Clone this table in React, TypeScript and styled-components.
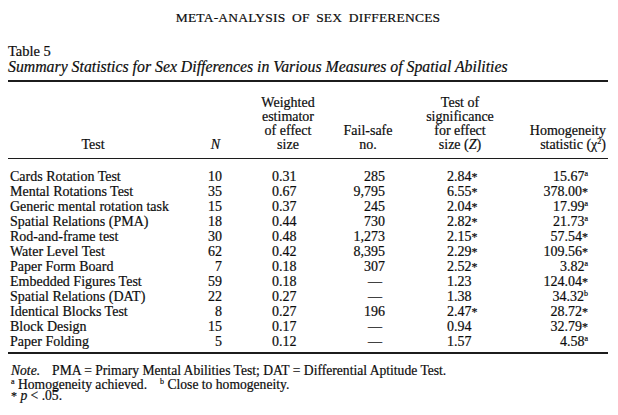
import React from "react";
import styled, { createGlobalStyle } from "styled-components";

const GlobalStyle = createGlobalStyle`
  html, body {
    margin: 0;
    padding: 0;
    background: #ffffff;
  }
  body {
    font-family: "Liberation Serif", "Times New Roman", serif;
    color: #0d0d0d;
    -webkit-text-stroke: 0.2px #0d0d0d;
  }
`;

const Page = styled.div`
  width: 618px;
  height: 415px;
  box-sizing: border-box;
  padding: 10px 10px 0 8px;
  overflow: hidden;
`;

const RunningHead = styled.div`
  font-size: 13.5px;
  line-height: 16px;
  letter-spacing: 0.2px;
  word-spacing: 3px;
  text-align: center;
`;

const Caption = styled.div`
  margin-top: 18px;
  margin-bottom: 6px;
`;

const TableLabel = styled.div`
  font-size: 14.5px;
  line-height: 15px;
`;

const TableTitle = styled.div`
  font-size: 15.8px;
  line-height: 15px;
  height: 15px;
  font-style: italic;
  white-space: nowrap;
`;

const Table = styled.table`
  width: 600px;
  border-collapse: collapse;
  table-layout: fixed;
  font-size: 14px;
`;

const Head = styled.thead`
  border-top: 2px solid #1c1c1c;
  border-bottom: 1px solid #1c1c1c;
`;

const Body = styled.tbody`
  border-bottom: 2px solid #1c1c1c;
`;

type Align = "left" | "center" | "right";

const HeadCell = styled.th<{ $align?: Align; $padL?: number; $padR?: number }>`
  font-weight: normal;
  line-height: 14px;
  vertical-align: bottom;
  white-space: nowrap;
  text-align: ${(p) => p.$align ?? "center"};
  padding: 14px ${(p) => p.$padR ?? 0}px 6px ${(p) => p.$padL ?? 0}px;
`;

const Cell = styled.td<{ $align?: Align; $padL?: number; $padR?: number; $first?: boolean; $last?: boolean }>`
  line-height: 15px;
  height: 15px;
  white-space: nowrap;
  text-align: ${(p) => p.$align ?? "left"};
  padding: ${(p) => (p.$first ? 10 : 0)}px ${(p) => p.$padR ?? 0}px
    ${(p) => (p.$last ? 3 : 0)}px ${(p) => p.$padL ?? 0}px;
`;

const Italic = styled.i`
  font-style: italic;
`;

const Sup = styled.sup`
  font-size: 8px;
  line-height: 1;
  vertical-align: 5px;
`;

const Star = styled.span`
  font-size: 12px;
  line-height: 1;
`;

const Dash = styled.span`
  display: inline-block;
  margin-right: 3px;
`;

const Notes = styled.div`
  margin-top: 11px;
  padding-left: 3px;
  font-size: 13.6px;
  line-height: 12.5px;
`;

const NoteLine = styled.div`
  height: 12.5px;
  white-space: nowrap;
`;

const Gap = styled.span<{ $w: number }>`
  display: inline-block;
  width: ${(p) => p.$w}px;
`;

type Mark = "a" | "b" | "*" | "";

interface Row {
  test: string;
  n: number;
  w: string;
  fs: string;
  z: string;
  zStar: boolean;
  h: string;
  hMark: Mark;
}

const rows: Row[] = [
  { test: "Cards Rotation Test", n: 10, w: "0.31", fs: "285", z: "2.84", zStar: true, h: "15.67", hMark: "a" },
  { test: "Mental Rotations Test", n: 35, w: "0.67", fs: "9,795", z: "6.55", zStar: true, h: "378.00", hMark: "*" },
  { test: "Generic mental rotation task", n: 15, w: "0.37", fs: "245", z: "2.04", zStar: true, h: "17.99", hMark: "a" },
  { test: "Spatial Relations (PMA)", n: 18, w: "0.44", fs: "730", z: "2.82", zStar: true, h: "21.73", hMark: "a" },
  { test: "Rod-and-frame test", n: 30, w: "0.48", fs: "1,273", z: "2.15", zStar: true, h: "57.54", hMark: "*" },
  { test: "Water Level Test", n: 62, w: "0.42", fs: "8,395", z: "2.29", zStar: true, h: "109.56", hMark: "*" },
  { test: "Paper Form Board", n: 7, w: "0.18", fs: "307", z: "2.52", zStar: true, h: "3.82", hMark: "a" },
  { test: "Embedded Figures Test", n: 59, w: "0.18", fs: "", z: "1.23", zStar: false, h: "124.04", hMark: "*" },
  { test: "Spatial Relations (DAT)", n: 22, w: "0.27", fs: "", z: "1.38", zStar: false, h: "34.32", hMark: "b" },
  { test: "Identical Blocks Test", n: 8, w: "0.27", fs: "196", z: "2.47", zStar: true, h: "28.72", hMark: "*" },
  { test: "Block Design", n: 15, w: "0.17", fs: "", z: "0.94", zStar: false, h: "32.79", hMark: "*" },
  { test: "Paper Folding", n: 5, w: "0.12", fs: "", z: "1.57", zStar: false, h: "4.58", hMark: "a" },
];

const renderMark = (m: Mark) => {
  if (m === "*") return <Star>*</Star>;
  if (m === "a" || m === "b") return <Sup>{m}</Sup>;
  return null;
};

export default function App() {
  return (
    <>
      <GlobalStyle />
      <Page>
        <RunningHead>META-ANALYSIS OF SEX DIFFERENCES</RunningHead>
        <Caption>
          <TableLabel>Table 5</TableLabel>
          <TableTitle>
            Summary Statistics for Sex Differences in Various Measures of Spatial Abilities
          </TableTitle>
        </Caption>
        <Table>
          <colgroup>
            <col style={{ width: 170 }} />
            <col style={{ width: 48 }} />
            <col style={{ width: 110 }} />
            <col style={{ width: 64 }} />
            <col style={{ width: 120 }} />
            <col style={{ width: 88 }} />
          </colgroup>
          <Head>
            <tr>
              <HeadCell>Test</HeadCell>
              <HeadCell $align="right" $padR={6}>
                <Italic>N</Italic>
              </HeadCell>
              <HeadCell $padL={14}>
                Weighted
                <br />
                estimator
                <br />
                of effect
                <br />
                size
              </HeadCell>
              <HeadCell>
                Fail-safe
                <br />
                no.
              </HeadCell>
              <HeadCell>
                Test of
                <br />
                significance
                <br />
                for effect
                <br />
                size (<Italic>Z</Italic>)
              </HeadCell>
              <HeadCell $align="right" $padR={2}>
                Homogeneity
                <br />
                statistic (χ<Sup>2</Sup>)
              </HeadCell>
            </tr>
          </Head>
          <Body>
            {rows.map((r, i) => {
              const first = i === 0;
              const last = i === rows.length - 1;
              return (
                <tr key={r.test}>
                  <Cell $padL={2} $first={first} $last={last}>
                    {r.test}
                  </Cell>
                  <Cell $align="right" $padR={4} $first={first} $last={last}>
                    {r.n}
                  </Cell>
                  <Cell $align="left" $padL={46} $first={first} $last={last}>
                    {r.w}
                  </Cell>
                  <Cell $align="right" $padR={15} $first={first} $last={last}>
                    {r.fs === "" ? <Dash>—</Dash> : r.fs}
                  </Cell>
                  <Cell $align="left" $padL={47} $first={first} $last={last}>
                    {r.z}
                    {r.zStar ? <Star>*</Star> : null}
                  </Cell>
                  <Cell $align="right" $padR={20} $first={first} $last={last}>
                    {r.h}
                    {renderMark(r.hMark)}
                  </Cell>
                </tr>
              );
            })}
          </Body>
        </Table>
        <Notes>
          <NoteLine>
            <Italic>Note.</Italic>
            <Gap $w={12} />
            PMA = Primary Mental Abilities Test; DAT = Differential Aptitude Test.
          </NoteLine>
          <NoteLine>
            <Sup>a</Sup> Homogeneity achieved.
            <Gap $w={13} />
            <Sup>b</Sup> Close to homogeneity.
          </NoteLine>
          <NoteLine>
            <Star>*</Star> <Italic>p</Italic> &lt; .05.
          </NoteLine>
        </Notes>
      </Page>
    </>
  );
}
